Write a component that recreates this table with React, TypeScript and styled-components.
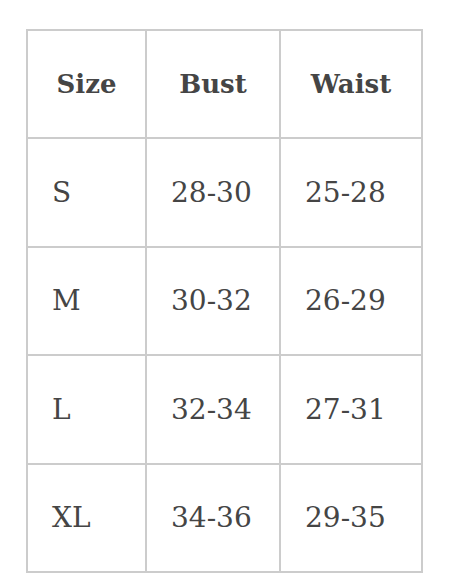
import styled, { createGlobalStyle } from 'styled-components';

const rows = [
  { size: 'S', bust: '28-30', waist: '25-28' },
  { size: 'M', bust: '30-32', waist: '26-29' },
  { size: 'L', bust: '32-34', waist: '27-31' },
  { size: 'XL', bust: '34-36', waist: '29-35' },
];

export default function App() {
  return (
    <>
      <GlobalStyle />
      <Page>
        <SizeTable>
          <colgroup>
            <col style={{ width: 119 }} />
            <col style={{ width: 134 }} />
            <col style={{ width: 142 }} />
          </colgroup>
          <thead>
            <Row>
              <HeadCell>Size</HeadCell>
              <HeadCell>Bust</HeadCell>
              <HeadCell>Waist</HeadCell>
            </Row>
          </thead>
          <tbody>
            {rows.map((row) => (
              <Row key={row.size}>
                <Cell>{row.size}</Cell>
                <Cell>{row.bust}</Cell>
                <Cell>{row.waist}</Cell>
              </Row>
            ))}
          </tbody>
        </SizeTable>
      </Page>
    </>
  );
}

const GlobalStyle = createGlobalStyle`
  body {
    margin: 0;
    background: #ffffff;
    font-family: "DejaVu Serif", "Liberation Serif", serif;
  }
`;

const Page = styled.div`
  padding: 29px 0 0 26px;
`;

const SizeTable = styled.table`
  border-collapse: collapse;
  table-layout: fixed;
  width: 395px;
  color: #454545;
`;

const Row = styled.tr`
  height: 108.4px;
`;

const HeadCell = styled.th`
  border: 2px solid #cccccc;
  font-size: 26px;
  font-weight: bold;
  text-align: center;
  vertical-align: middle;
  padding: 0;
`;

const Cell = styled.td`
  border: 2px solid #cccccc;
  font-size: 28px;
  font-weight: normal;
  text-align: left;
  vertical-align: middle;
  padding: 0 0 0 24px;
`;
